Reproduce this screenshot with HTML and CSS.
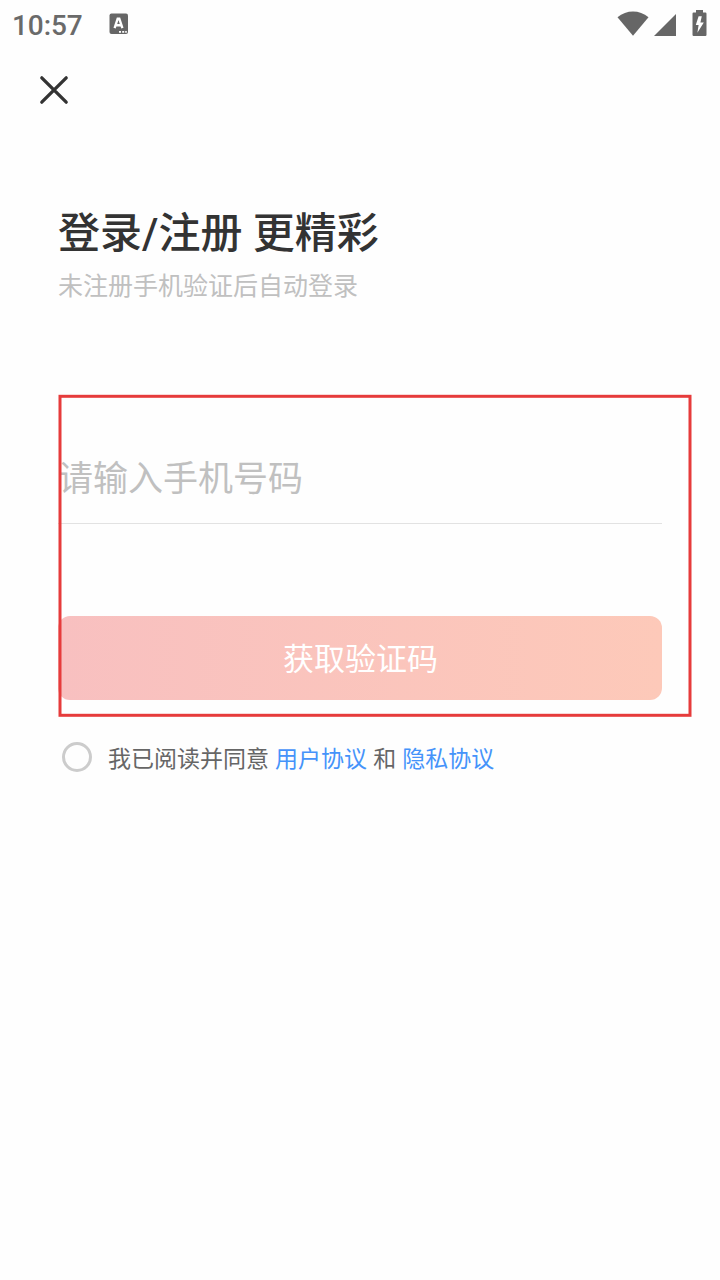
FILE: index.html
```html
<!DOCTYPE html>
<html lang="zh-CN">
<head>
  <meta charset="UTF-8" />
  <title>登录/注册</title>
  <link rel="stylesheet" href="styles.css">
</head>
<body>

<div class="status-bar">
  <span class="time">10:57</span>
  <svg class="keyboard-icon" width="20" height="22" viewBox="0 0 20 22">
    <rect x="0.5" y="0.5" width="18.5" height="20.5" rx="2" fill="#666"/>
    <path d="M5.6 15.2L8.7 5.6H10.3L13.4 15.2M7 12.2H12" fill="none" stroke="#fff" stroke-width="2.4"/>
    <path d="M10 18h2v1.8h-2zM13.2 18h2v1.8h-2zM16.2 18h1.6v1.8h-1.6z" fill="#fff"/>
  </svg>
  <div class="status-icons">
    <svg class="wifi-icon" width="32" height="25" viewBox="0 0 32 25">
      <path d="M0.5 6.2C9.5 -1.3 22.5 -1.3 31.5 6.2L16 24.8Z" fill="#666"/>
    </svg>
    <svg class="signal-icon" width="22" height="22" viewBox="0 0 22 22">
      <path d="M0 22L22 0V22Z" fill="#666"/>
    </svg>
    <svg class="battery-icon" width="15" height="26" viewBox="0 0 15 26">
      <path d="M4 0H11V2.6H13.4Q14.5 2.6 14.5 3.7V24.8Q14.5 26 13.4 26H1.6Q0.5 26 0.5 24.8V3.7Q0.5 2.6 1.6 2.6H4Z" fill="#666"/>
      <path d="M9.8 6.2H6.6L3.8 15H6.6L5.4 22.8L11.8 12.4H8.4Z" fill="#fff"/>
    </svg>
  </div>
</div>

<header>
  <button class="btn-close" aria-label="关闭">
    <svg width="30" height="30" viewBox="0 0 30 30">
      <path d="M2.8 2.8L27.2 27.2M27.2 2.8L2.8 27.2" stroke="#333" stroke-width="3.3" stroke-linecap="round"/>
    </svg>
  </button>
</header>

<main>
  <h1>登录/注册 更精彩</h1>
  <p class="subtitle">未注册手机验证后自动登录</p>

  <form class="login-form">
    <input class="phone" type="tel" placeholder="请输入手机号码">
    <button class="btn-code" type="button">获取验证码</button>
    <svg class="highlight" width="636" height="326" viewBox="0 0 636 326">
      <rect x="3" y="3.3" width="630" height="319" fill="none" stroke="#e63b3b" stroke-width="3"/>
    </svg>
  </form>

  <div class="agreement">
    <span class="radio"></span>
    <p>我已阅读并同意 <a>用户协议</a> 和 <a>隐私协议</a></p>
  </div>
</main>

</body>
</html>
```
FILE: styles.css
```css
* {
  box-sizing: border-box;
}

body {
  font-family: Roboto, "Noto Sans CJK SC", sans-serif;
  margin: 0;
  min-height: 1280px;
  background-color: #fefefe;
  color: #333;
}

button {
  border: none;
  padding: 0;
  background: none;
  font-family: inherit;
}

svg {
  display: block;
}

.status-bar {
  display: flex;
  align-items: center;
  height: 47px;
  padding: 0 13px 0 12px;
}

.time {
  font-size: 28px;
  font-weight: 500;
  line-height: 48px;
  padding-top: 5px;
  width: 97px;
  letter-spacing: -0.1px;
  color: #6a6a6a;
}

.status-icons {
  display: flex;
  align-items: flex-end;
  margin-left: auto;
  padding-bottom: 1px;
}

.wifi-icon {
  margin-right: -1px;
}

.signal-icon {
  margin-left: 6px;
}

.battery-icon {
  margin-left: 16px;
}

header {
  display: flex;
  height: 85px;
  padding: 28px 39px;
}

.btn-close {
  width: 30px;
  height: 30px;
}

main {
  padding: 72px 58px 0;
}

h1 {
  margin: 0;
  font-size: 42px;
  font-weight: 500;
  line-height: 60px;
}

.subtitle {
  margin: 4px 0 0;
  font-size: 25px;
  line-height: 38px;
  color: #c0c0c0;
}

.login-form {
  position: relative;
  display: flex;
  flex-direction: column;
  width: 604px;
  height: 324px;
  margin-top: 87px;
  padding-top: 36px;
}

.phone {
  height: 95px;
  padding: 6px 0 0;
  border: none;
  border-bottom: 1px solid #e2e2e2;
  background: none;
  font-family: inherit;
  font-size: 35px;
  outline: none;
}

.phone::placeholder {
  color: #c0c0c0;
  opacity: 1;
}

.btn-code {
  height: 84px;
  margin-top: 92px;
  padding: 0 0 3px 1px;
  border-radius: 12px;
  background: linear-gradient(to right, #f8c0c0, #fdc9b9);
  color: white;
  font-size: 31px;
}

/* red frame laid over the form */
.highlight {
  position: absolute;
  top: 0;
  left: -1px;
}

.agreement {
  display: flex;
  align-items: center;
  height: 40px;
  margin-top: 20px;
  padding-left: 4px;
}

.radio {
  width: 30px;
  height: 30px;
  border: 3px solid #ccc;
  border-radius: 50%;
}

.agreement p {
  margin: 0 0 0 16px;
  padding-top: 5px;
  font-size: 23px;
  line-height: 36px;
  word-spacing: 0.4px;
  color: #666;
}

.agreement a {
  color: #4593fa;
}
```
